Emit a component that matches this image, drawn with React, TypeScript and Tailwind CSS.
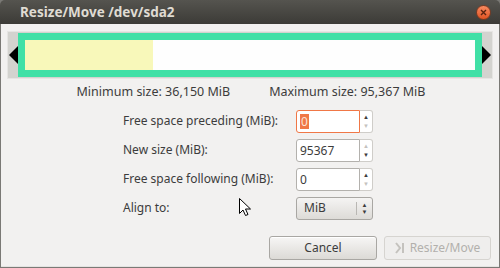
function SpinBox({ value, focused, upOff, downOff }: { value: string; focused?: boolean; upOff?: boolean; downOff?: boolean }) {
  return (
    <div className="flex h-[23px] w-[77px]">
      <div
        className={
          focused
            ? "flex w-[64px] items-center rounded-l-[3px] border border-[#f07746] bg-white pl-[3px]"
            : "flex w-[64px] items-center rounded-l-[3px] border border-[#b3b1ad] bg-white pl-[3px]"
        }
      >
        {focused ? (
          <span className="bg-[#f07746] px-[1px] leading-[15px] text-[#fbe3d8]">{value}</span>
        ) : (
          <span className="leading-[15px]">{value}</span>
        )}
      </div>
      <div className="flex w-[13px] flex-col items-center justify-center gap-[3px] rounded-r-[3px] border border-l-0 border-[#cfcdc9] bg-white">
        <span className={upOff ? "text-[6px] leading-[6px] text-[#c4c2be]" : "text-[6px] leading-[6px] text-[#3c3c3c]"}>▲</span>
        <span className={downOff ? "text-[6px] leading-[6px] text-[#c4c2be]" : "text-[6px] leading-[6px] text-[#3c3c3c]"}>▼</span>
      </div>
    </div>
  );
}

export default function App() {
  return (
    <div className="relative h-[268px] w-[500px] bg-[#7a7975] font-['Noto_Sans',sans-serif] text-[12px] text-[#3c3c3c]">
      <div className="flex h-[24px] items-center justify-between rounded-t-[5px] bg-gradient-to-b from-[#55544f] to-[#3c3b37] pl-[20px] pr-[9px]">
        <span className="text-[13.5px] font-bold text-[#dfdbd2]">Resize/Move /dev/sda2</span>
        <div className="flex h-[15px] w-[15px] items-center justify-center rounded-full border border-[#7a3a22] bg-gradient-to-b from-[#f78a5f] to-[#e0521f]">
          <svg width="7" height="7" viewBox="0 0 7 7">
            <path d="M1 1L6 6M6 1L1 6" stroke="#5a2310" strokeWidth="1.4" />
          </svg>
        </div>
      </div>

      <div className="mx-[1px] flex h-[242px] flex-col bg-[#f2f1f0]">
        <div className="mx-[6px] mt-[7px] flex h-[48px] items-center border border-[#e6e5e3] bg-[#d3d3cf]">
          <div className="flex w-[10px] justify-start pl-[1px]">
            <svg width="9" height="18" viewBox="0 0 9 18">
              <path d="M9 0L0 9L9 18Z" fill="#000" />
            </svg>
          </div>
          <div className="flex h-[44px] w-[464px] border-[7px] border-[#40e0a6]">
            <div className="w-[128px] bg-[#f8f8ba]" />
            <div className="flex-1 bg-[#fefefe]" />
          </div>
          <div className="flex w-[10px] justify-start">
            <svg width="9" height="18" viewBox="0 0 9 18">
              <path d="M0 0L9 9L0 18Z" fill="#000" />
            </svg>
          </div>
        </div>

        <div className="mt-[4px] flex justify-center gap-[39px] pl-[2px] text-[12.5px]">
          <span>Minimum size: 36,150 MiB</span>
          <span>Maximum size: 95,367 MiB</span>
        </div>

        <div className="mt-[8px] grid grid-cols-[173px_77px] gap-y-[6px] pl-[122px]">
          <span className="self-center">Free space preceding (MiB):</span>
          <SpinBox value="0" focused downOff />
          <span className="self-center">New size (MiB):</span>
          <SpinBox value="95367" upOff />
          <span className="self-center">Free space following (MiB):</span>
          <SpinBox value="0" downOff />
          <span className="self-center">Align to:</span>
          <div className="flex h-[23px] w-[77px] items-center rounded-[3px] border border-[#a9a7a3] bg-gradient-to-b from-[#f5f4f3] to-[#dddbd7]">
            <span className="w-[59px] pl-[7px]">MiB</span>
            <div className="h-[13px] w-[1px] bg-[#b9b7b3]" />
            <div className="flex flex-1 flex-col items-center gap-[1px]">
              <span className="text-[6px] leading-[6px]">▲</span>
              <span className="text-[6px] leading-[6px]">▼</span>
            </div>
          </div>
        </div>

        <div className="mt-[16px] flex justify-end gap-[7px] pr-[8px]">
          <button className="flex h-[24px] w-[108px] items-center justify-center rounded-[3px] border border-[#a9a7a3] bg-gradient-to-b from-[#f7f6f5] to-[#dcdad6] shadow-[inset_0_1px_0_#ffffff]">
            Cancel
          </button>
          <button className="flex h-[24px] w-[107px] items-center justify-center gap-[4px] rounded-[3px] border border-[#d6d4d0] bg-[#efeeed] text-[#b2b0ac]">
            <svg width="11" height="12" viewBox="0 0 11 12">
              <path d="M1 1L5 6L1 11" stroke="#c4c2be" strokeWidth="2" fill="none" />
              <path d="M8 1V11" stroke="#c4c2be" strokeWidth="2" />
            </svg>
            Resize/Move
          </button>
        </div>
      </div>
      <div className="mx-[1px] h-[1px] bg-[#e4e3e1]" />

      <svg className="absolute left-[239px] top-[198px]" width="13" height="19" viewBox="0 0 13 19">
        <path d="M0.5 0.5V15.5L4 12L6.5 17.5L9 16.5L6.5 11H11.5Z" fill="#fff" stroke="#000" strokeWidth="1" />
      </svg>
    </div>
  );
}
